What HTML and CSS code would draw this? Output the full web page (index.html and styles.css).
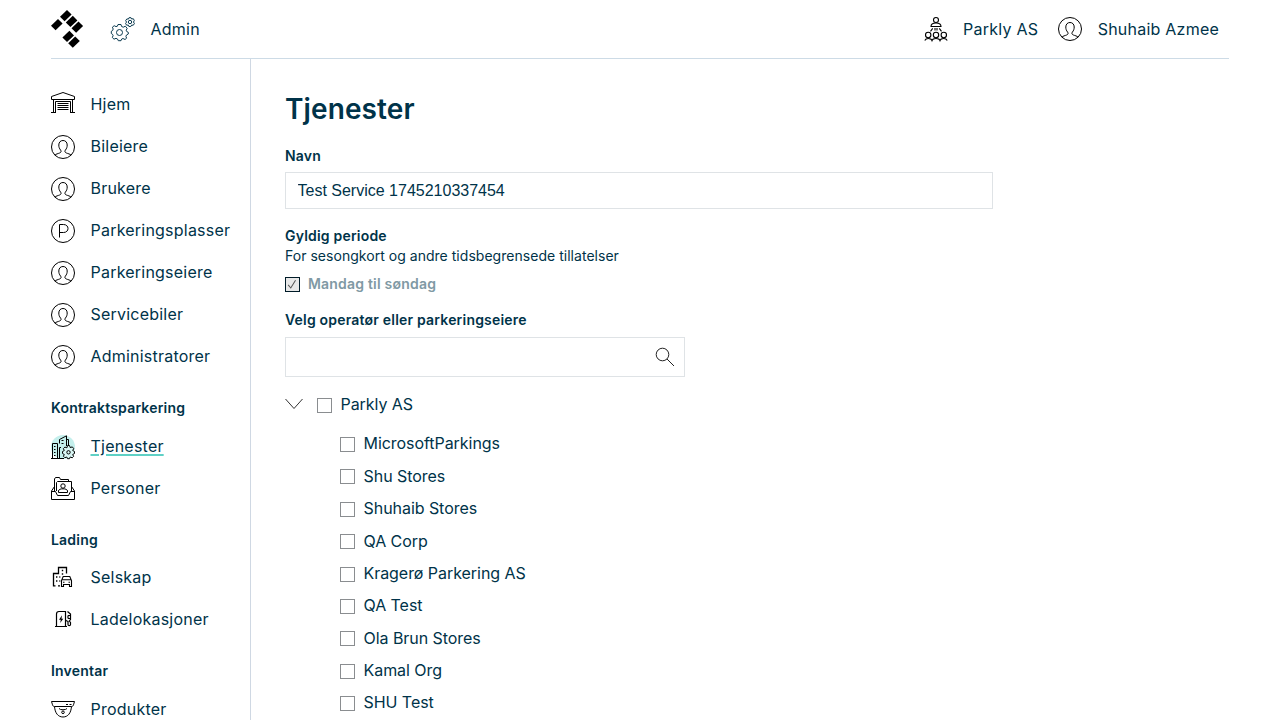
FILE: index.html
```html
<!DOCTYPE html>
<html lang="no">
<head>
<meta charset="utf-8">
<title>Tjenester</title>
<link rel="stylesheet" href="styles.css">
</head>
<body>
<svg class="sprite" aria-hidden="true">
  <symbol id="user" viewBox="0 0 24 24" overflow="visible">
    <circle cx="12" cy="12" r="11.5"/>
    <path d="M3.900 20.200C5 18.900 7 18.700 8.600 18C10.300 17.300 10.400 16.200 9.600 15.100C8.300 13.500 7.800 12 7.800 10C7.800 7.200 9.600 5.500 12 5.500S16.200 7.200 16.200 10C16.200 12 15.700 13.500 14.400 15.100C13.600 16.200 13.700 17.300 15.400 18C17 18.700 19 18.900 20.100 20.200"/>
  </symbol>
  <symbol id="brick" viewBox="0 0 12 12" overflow="visible">
    <path d="M0 6.700L7 0L11.600 4.600L4.600 11.300z"/>
  </symbol>
</svg>
<header class="topbar">
  <div class="group">
    <svg class="logo" viewBox="0 0 32 38">
      <use href="#brick" x="9" y="0" width="12" height="12"/>
      <use href="#brick" x="0" y="9" width="12" height="12"/>
      <use href="#brick" x="14.800" y="5.800" width="12" height="12"/>
      <use href="#brick" x="20.500" y="11.500" width="12" height="12"/>
      <use href="#brick" x="11.400" y="20.800" width="12" height="12"/>
      <use href="#brick" x="17.200" y="26.500" width="12" height="12"/>
    </svg>
    <svg class="icon gears" viewBox="0 0 24 24">
      <g stroke="#0b3b50">
        <circle cx="8.500" cy="15.500" r="3"/>
        <path d="M7 7.500H10L10.600 9.500L12.300 10.200L14.300 9.200L16.200 11.300L15.200 13.200L15.700 14.500L17.300 15.300V17L15.500 18L14.900 19.300L15.600 21.200L14 22.500L12 21.500L10.700 22L10 23.700H7.300L6.500 22L5 21.300L3 22.200L1.300 20.500L2.100 18.600L1.500 17.300L.3 16.500V14.300L1.600 13.500L2.200 12L1.400 10.200L3.200 8.700L5 9.600L6.400 9.200z"/>
        <circle cx="19" cy="5" r="1.700"/>
        <path d="M18 .7H20L20.600 2L22.300 1.700L23.300 3.500L22.500 5L23.400 6.600L22.200 8.300L20.700 8L19.800 9.500H17.900L17.300 8.100L15.600 8.200L14.600 6.500L15.500 5.100L14.700 3.500L15.900 1.900L17.400 2.100z"/>
      </g>
    </svg>
    <span class="label">Admin</span>
  </div>
  <div class="group">
    <svg class="icon" viewBox="0 0 24 24" stroke-width="1.100">
      <circle cx="12" cy="3" r="2.500"/>
      <path d="M7 9.500C7 7 9 6 12 6S17 7 17 9.500zM8.700 11.300L6.500 14.300M11 11V13.500M13 11V13.500M15.300 11.300L17.500 14.300"/>
      <circle cx="4.200" cy="18" r="2.700"/><circle cx="12" cy="18" r="2.700"/><circle cx="19.800" cy="18" r="2.700"/>
      <path d="M.8 23.500C1.500 22 3 21.500 4.200 21.500S7.500 22 8 23.500C8.500 22 10.500 21.500 12 21.500S15.500 22 16 23.500C16.500 22 18.300 21.500 19.800 21.500S22.500 22 23.200 23.500"/>
    </svg>
    <span class="label">Parkly AS</span>
    <svg class="icon profile"><use href="#user"/></svg>
    <span class="label">Shuhaib Azmee</span>
  </div>
</header>
<div class="body">
  <nav class="sidebar">
    <a class="item"><svg class="icon" viewBox="0 0 24 24"><path d="M.5 7V4.500L12 .5L23.500 4.500V7.500H.5zM2.500 7.500V20M21.500 7.500V20M0 20.500H5M19 20.500H24M4.500 20.500V9.500H19.500V20.500M6.500 11.500H17.500M6.500 13.500H17.500M6.500 15.500H17.500M6.500 17.500H17.500"/></svg>Hjem</a>
    <a class="item"><svg class="icon low"><use href="#user"/></svg>Bileiere</a>
    <a class="item"><svg class="icon low"><use href="#user"/></svg>Brukere</a>
    <a class="item"><svg class="icon low" viewBox="0 0 24 24"><circle cx="12" cy="12" r="11.500"/><path d="M8.500 18.500V5.500H12.500C18.500 5.500 18.500 13.500 12.500 13.500H8.500"/></svg>Parkeringsplasser</a>
    <a class="item"><svg class="icon low"><use href="#user"/></svg>Parkeringseiere</a>
    <a class="item"><svg class="icon low"><use href="#user"/></svg>Servicebiler</a>
    <a class="item"><svg class="icon low"><use href="#user"/></svg>Administratorer</a>
    <h2 class="section">Kontraktsparkering</h2>
    <a class="item active"><svg class="icon low" viewBox="0 0 24 24"><circle cx="12" cy="12" r="12" fill="#c4efec" stroke="none"/><path d="M0 23.500H13M1.500 23V8.500H6.500V23M3 11.500H4.500M3 14.500H4.500M3 17.500H4.500M3 20.500H4.500M8.500 8.500V4.500L15.500 .8V11M15.500 4.500H17.500V11M10.500 5.500H12.500M10.500 8.500H12.500M8.500 23V12.500H10"/><path fill="#d9f6f4" d="M16.600 10.500H18.500L19.200 12.600L21.300 11.900L22.700 13.600L21.700 15.500L23.500 16.500V18.500L21.700 19.500L22.600 21.400L21.200 22.800L19.200 22L18.500 23.700H16.500L15.800 22L13.800 22.700L12.400 21.200L13.300 19.500L11.500 18.500V16.500L13.300 15.500L12.400 13.600L13.900 12.100L15.900 12.800z"/><circle cx="17.500" cy="17.300" r="1.700"/></svg><span class="current">Tjenester</span></a>
    <a class="item"><svg class="icon low" viewBox="0 0 24 24"><path d="M.5 14V22.500H23.500V14L20.500 9.500M.5 14L3.500 9.500M3.500 14V2L4.500 .5H8.500L9.500 2.500H17.500V4M5.500 14V5.500L6.500 4.500H20.500V14M.5 14.500H4.500L6.500 18.500H17.500L19.500 14.500H23.500"/><circle cx="12" cy="9" r="2.200"/><path d="M7.500 15.500V14C7.500 12.500 9.500 11.800 12 11.800S16.500 12.500 16.500 14V15.500z"/></svg>Personer</a>
    <h2 class="section">Lading</h2>
    <a class="item"><svg class="icon" viewBox="0 0 24 24" stroke-width="1.300"><path d="M2.500 21.500V8.500H7.500V2.500H15.500V8.500M2 20.800H4.500M7 20.800H9"/><path d="M10.800 5.500H12.200M10.800 9H12.200M5 12H6.400M5 16H6.400M8.300 12H9.300M8.300 16H9.300"/><path stroke-width="1.100" d="M10.500 21.500V15.500L12.200 11.500H18.800L20.500 15.500V21.500H18.500V19.500H12.500V21.500zM10.500 14.800H20.500M12 17.200H13.500M17.500 17.200H19"/></svg>Selskap</a>
    <a class="item"><svg class="icon" viewBox="0 0 24 24" stroke-width="1.200"><path d="M4 19.500H16M5.500 19V7C5.500 5.200 6.300 4.500 8 4.500H14.500V19M16.500 4.500L19.500 7V12.500L18.300 14L19.500 15.500V17.500C19.500 19 17 19 17 17.500V14.500L15 13.500M17 8.500H19.500M17 11.500H19.500M17 8.500V11.500"/><path fill="#000" stroke="none" d="M11 8.300L8 12.800H9.800L9.200 16L12.300 11.700H10.500z"/></svg>Ladelokasjoner</a>
    <h2 class="section">Inventar</h2>
    <a class="item"><svg class="icon" viewBox="0 0 24 24"><path d="M.5 4.500H23.500L22.500 7.800C22.200 9 21.500 9.500 20.500 9.500H3.500C2.500 9.500 1.800 9 1.500 7.800zM3.500 9.500C4 16 7 20 12 20S20 16 20.500 9.500M15 7.500H17M18.500 7.500H20.500M8 11.500C9 13.200 15 13.200 16 11.500"/><circle cx="12" cy="15.300" r="1.300"/></svg>Produkter</a>
  </nav>
  <main class="content">
    <h1 class="title">Tjenester</h1>
    <h3 class="caption">Navn</h3>
    <input class="name" type="text" value="Test Service 1745210337454">
    <h3 class="caption period">Gyldig periode</h3>
    <p class="hint">For sesongkort og andre tidsbegrensede tillatelser</p>
    <div class="check-row disabled"><span class="box checked"><svg viewBox="0 0 15 15"><path d="M2.500 8L5.500 11.500L11 2.500" fill="none" stroke="#555" stroke-width="1.200"/></svg></span>Mandag til søndag</div>
    <h3 class="caption owners">Velg operatør eller parkeringseiere</h3>
    <div class="search"><svg viewBox="0 0 20 20"><circle cx="7.500" cy="7.500" r="6.300"/><path d="M12 12L19 19"/></svg></div>
    <div class="check-row parent"><svg class="chevron" viewBox="0 0 18 12"><path d="M.5 1L9 10.500L17.500 1"/></svg><span class="box"></span>Parkly AS</div>
    <div class="children">
      <div class="check-row"><span class="box"></span>MicrosoftParkings</div>
      <div class="check-row"><span class="box"></span>Shu Stores</div>
      <div class="check-row"><span class="box"></span>Shuhaib Stores</div>
      <div class="check-row"><span class="box"></span>QA Corp</div>
      <div class="check-row"><span class="box"></span>Kragerø Parkering AS</div>
      <div class="check-row"><span class="box"></span>QA Test</div>
      <div class="check-row"><span class="box"></span>Ola Brun Stores</div>
      <div class="check-row"><span class="box"></span>Kamal Org</div>
      <div class="check-row"><span class="box"></span>SHU Test</div>
    </div>
  </main>
</div>
</body>
</html>
```
FILE: styles.css
```css
* { box-sizing: border-box; }
body {
  margin: 0;
  padding: 0 51px;
  height: 720px;
  overflow: hidden;
  display: flex;
  flex-direction: column;
  background: #fff;
  color: #003349;
  font: 400 16px/20px Inter, "Liberation Sans", sans-serif;
}
h1, h2, h3, p { margin: 0; }
.sprite { position: absolute; width: 0; height: 0; }
.topbar {
  display: flex;
  justify-content: space-between;
  height: 59px;
  flex: none;
  border-bottom: 1px solid #cddbe6;
  letter-spacing: 0.23px;
}
.group { display: flex; align-items: center; }
.group:last-child { padding-right: 10px; }
.label { margin-left: 15.500px; }
.icon { width: 24px; height: 24px; flex: none; fill: none; stroke: #000; overflow: visible; }
.low { margin-top: 2px; }
.logo { width: 32px; height: 38px; fill: #000; overflow: visible; }
.gears { margin-left: 28px; }
.profile { margin-left: 20px; }
.body { display: flex; flex: 1; min-height: 0; }
.sidebar {
  width: 200px;
  flex: none;
  padding-top: 24px;
  border-right: 1px solid #cfd8e3;
  letter-spacing: 0.22px;
  overflow: hidden;
}
.item { display: flex; align-items: center; gap: 15.500px; height: 42px; white-space: nowrap; }
.section { font-size: 14px; font-weight: 600; line-height: 20px; padding: 21px 0 6.500px; letter-spacing: 0.2px; }
.current { text-decoration: underline; text-decoration-color: #5fd0c5; text-decoration-thickness: 2px; text-underline-offset: 2px; }
.content { flex: 1; padding: 30px 0 0 34px; overflow: hidden; }
.title { font-size: 28px; font-weight: 600; line-height: 40px; letter-spacing: 0.1px; }
.caption { font-size: 14px; font-weight: 600; line-height: 20px; margin-top: 17px; letter-spacing: 0.2px; }
.name {
  display: block;
  width: 708px;
  height: 37px;
  margin-top: 6px;
  padding: 0 11.500px;
  border: 1px solid #dfe3e6;
  color: #003349;
  font: 16px "Liberation Sans", Arial, sans-serif;
}
.hint { font-size: 14px; line-height: 20px; letter-spacing: 0.03px; }
.check-row { display: flex; align-items: center; height: 32.380px; white-space: nowrap; letter-spacing: -0.05px; }
.box { width: 15px; height: 15px; flex: none; margin: 2.360px 8.500px 0 0; border: 1px solid #8a8d90; }
.checked { margin: 1px 8px 0 0; border: 1px solid #001b28; background: #e8e8e8; }
.checked svg { display: block; }
.disabled { height: 20px; margin-top: 8px; margin-bottom: 16px; color: #8099a4; font-size: 14px; font-weight: 600; letter-spacing: 0.2px; }
.owners { margin-top: 0; }
.search {
  display: flex;
  align-items: center;
  justify-content: flex-end;
  width: 400px;
  height: 40px;
  margin-top: 7px;
  padding-right: 9px;
  border: 1px solid #dfe3e6;
}
.search svg { width: 20px; height: 20px; fill: none; stroke: #222; }
.parent { height: 20px; margin-top: 17px; }
.chevron { width: 18px; height: 12px; margin-right: 14px; fill: none; stroke: #333; }
.children { padding: 13.220px 0 0 55px; }
```
